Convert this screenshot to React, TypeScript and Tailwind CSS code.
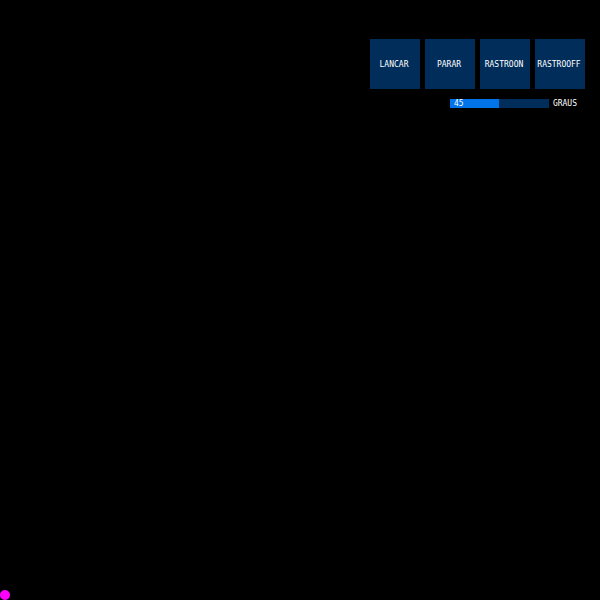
import { useState } from "react";

const buttons = ["LANCAR", "PARAR", "RASTROON", "RASTROOFF"];

function ActionButton({ label }: { label: string }) {
  return (
    <button
      type="button"
      className="flex size-[50px] items-center justify-center whitespace-nowrap bg-[#002d5a] pr-0.5 hover:bg-[#0074d9]"
    >
      {label}
    </button>
  );
}

function AngleSlider() {
  const max = 90;
  const [angle, setAngle] = useState(45);
  const filled = (angle / max) * 100;

  return (
    <div className="mt-2.5 flex h-[9px] items-center gap-1 pr-2">
      <div className="relative h-[9px] w-[99px]">
        <input
          id="angle"
          type="range"
          min={0}
          max={max}
          value={angle}
          onChange={(event) => setAngle(Number(event.target.value))}
          className="block h-[9px] w-full appearance-none bg-[#002d5a] [&::-webkit-slider-thumb]:opacity-0"
          style={{
            backgroundImage: `linear-gradient(to right, #0074e8 ${filled}%, transparent ${filled}%)`,
          }}
        />
        <output
          htmlFor="angle"
          className="pointer-events-none absolute inset-y-0 left-1 flex items-center"
        >
          {angle}
        </output>
      </div>
      <label htmlFor="angle">GRAUS</label>
    </div>
  );
}

export default function App() {
  return (
    <main className="flex min-h-screen flex-col overflow-hidden bg-black font-['DejaVu_Sans_Mono','Liberation_Mono',monospace] text-[8px] leading-[9px] text-white">
      <section className="flex flex-col items-end pr-[15px] pt-[39px]">
        <div className="flex gap-[5px]">
          {buttons.map((label) => (
            <ActionButton key={label} label={label} />
          ))}
        </div>
        <AngleSlider />
      </section>
      <div className="mt-auto size-2.5 rounded-full bg-[#ff00ff]" />
    </main>
  );
}
